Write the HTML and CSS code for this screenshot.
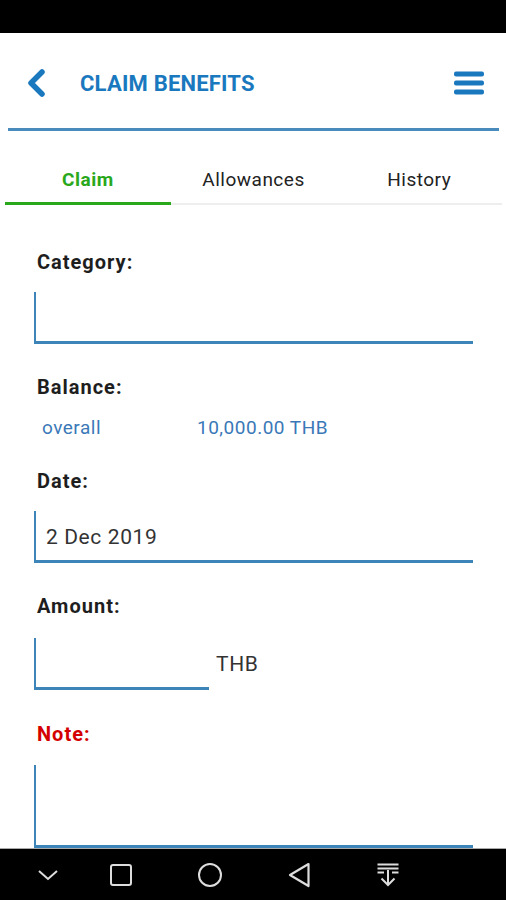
FILE: index.html
```html
<!DOCTYPE html>
<html>
<head>
  <title>Claim Benefits</title>
  <link rel="stylesheet" href="styles.css">
</head>
<body>
  <div class="screen">
    <div class="status-bar"></div>

    <div class="app">
      <div class="header">
        <svg class="back" width="22" height="30" viewBox="0 0 22 30">
          <path d="M17 4 L6 15 L17 26" fill="none" stroke="#1a78be" stroke-width="5.5" stroke-linecap="round" stroke-linejoin="round"/>
        </svg>
        <h1>CLAIM BENEFITS</h1>
        <svg class="menu" width="30" height="24" viewBox="0 0 30 24">
          <rect x="0" y="0.5" width="30" height="5" rx="2" fill="#1a78be"/>
          <rect x="0" y="9.5" width="30" height="5" rx="2" fill="#1a78be"/>
          <rect x="0" y="18.5" width="30" height="5" rx="2" fill="#1a78be"/>
        </svg>
      </div>
      <div class="header-line"></div>

      <div class="tabs">
        <div class="tab active">Claim</div>
        <div class="tab">Allowances</div>
        <div class="tab">History</div>
      </div>

      <form class="claim-form">
        <label class="label">Category:</label>
        <div class="field"></div>

        <label class="label">Balance:</label>
        <div class="balance">
          <span class="balance-name">overall</span>
          <span class="balance-value">10,000.00 THB</span>
        </div>

        <label class="label">Date:</label>
        <div class="field">2 Dec 2019</div>

        <label class="label">Amount:</label>
        <div class="amount-row">
          <div class="field short"></div>
          <span class="unit">THB</span>
        </div>

        <label class="label required">Note:</label>
        <div class="field tall"></div>
      </form>
    </div>

    <div class="nav-bar">
      <svg class="nav-down" width="26" height="26" viewBox="0 0 26 26">
        <path d="M4 9 L13 17 L22 9" fill="none" stroke="#ddd" stroke-width="2"/>
      </svg>
      <svg width="26" height="26" viewBox="0 0 26 26">
        <rect x="3" y="3" width="20" height="20" rx="2" fill="none" stroke="#ddd" stroke-width="2"/>
      </svg>
      <svg width="26" height="26" viewBox="0 0 26 26">
        <circle cx="13" cy="13" r="11" fill="none" stroke="#ddd" stroke-width="2"/>
      </svg>
      <svg width="26" height="26" viewBox="0 0 26 26">
        <path d="M22.5 2 L4 13 L22.5 24 Z" fill="none" stroke="#ddd" stroke-width="2.2" stroke-linejoin="round"/>
      </svg>
      <svg width="26" height="26" viewBox="0 0 26 26">
        <path d="M2.5 2.5 H23.5 M2.5 6.5 H23.5 M2.5 10.5 H9 M17 10.5 H23.5 M13 8 V23 M6.5 16.5 L13 23 L19.5 16.5" fill="none" stroke="#ddd" stroke-width="2"/>
      </svg>
    </div>
  </div>
</body>
</html>
```

FILE: styles.css
```css
body {
  margin: 0;
  padding: 0;
  font-family: Roboto, "Liberation Sans", Arial, sans-serif;
  background-color: #fff;
}

.screen {
  width: 506px;
  height: 900px;
  display: flex;
  flex-direction: column;
  overflow: hidden;
}

.status-bar {
  height: 33px;
  background-color: #000;
  flex-shrink: 0;
}

.app {
  flex: 1;
  overflow: hidden;
}

.header {
  height: 95px;
  display: flex;
  align-items: center;
  padding: 5px 22px 0 25px;
  box-sizing: border-box;
}

.back {
  margin-right: 33px;
}

.header h1 {
  flex: 1;
  margin: 0;
  font-size: 22px;
  font-weight: bold;
  color: #1a78be;
  letter-spacing: 0.2px;
}

.header-line {
  height: 3px;
  margin: 0 7px 0 8px;
  background-color: #4a8bbd;
}

.tabs {
  display: flex;
  margin: 38px 4px 0 5px;
  border-bottom: 2px solid #eee;
}

.tab {
  flex: 1;
  text-align: center;
  font-size: 19px;
  line-height: 22px;
  letter-spacing: 0.5px;
  color: #222;
  padding-bottom: 11px;
  margin-bottom: -2px;
  border-bottom: 3px solid transparent;
}

.tab.active {
  color: #2aa81c;
  font-weight: bold;
  border-bottom-color: #2aa81c;
}

.claim-form {
  padding: 45px 33px 0 34px;
}

.label {
  display: block;
  font-size: 20px;
  line-height: 24px;
  letter-spacing: 1px;
  font-weight: bold;
  color: #1e1e1e;
  margin: 0 0 18px 3px;
}

.label.required {
  color: #d40000;
  margin-bottom: 19px;
}

.field {
  height: 52px;
  border-left: 2px solid #3d85b8;
  border-bottom: 3px solid #3d85b8;
  box-sizing: border-box;
  padding: 14px 0 0 10px;
  font-size: 21px;
  line-height: 25px;
  letter-spacing: 0.6px;
  color: #333;
  margin-bottom: 31px;
}

.field.short {
  width: 175px;
  margin-bottom: 0;
}

.field.tall {
  height: 83px;
}

.amount-row {
  display: flex;
  align-items: center;
  margin: 20px 0 32px;
}

.unit {
  margin-left: 7px;
  font-size: 21px;
  letter-spacing: 0.6px;
  color: #333;
}

.balance {
  display: flex;
  font-size: 19px;
  line-height: 22px;
  letter-spacing: 0.5px;
  color: #3a78b8;
  padding-left: 8px;
  margin-bottom: 30px;
}

.balance-name {
  width: 155px;
}

.nav-bar {
  height: 51px;
  flex-shrink: 0;
  background-color: #000;
  border-top: 1px solid #aaa;
  display: flex;
  align-items: center;
  gap: 63px;
  padding-left: 35px;
}

.nav-bar .nav-down {
  margin-right: -16px;
}
```
